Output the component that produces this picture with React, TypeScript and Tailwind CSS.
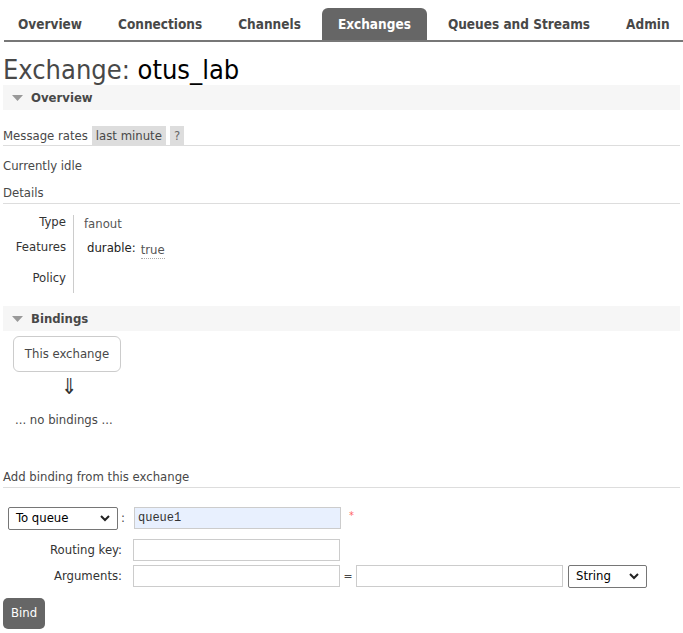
import React from 'react'

const font = { fontFamily: '"DejaVu Sans Condensed", "DejaVu Sans", Verdana, sans-serif' }

const tabs = ['Overview', 'Connections', 'Channels', 'Exchanges', 'Queues and Streams', 'Admin']

function Tri() {
    return (
        <svg width="11" height="8" viewBox="0 0 11 8" className="mr-[8px]">
            <path d="M0 1 L11 1 L5.5 7 Z" fill="#999" />
        </svg>
    )
}

function SectionHeader({ title }: { title: string }) {
    return (
        <div className="flex items-center h-[25px] bg-[#f6f6f6] pl-[9px] text-[13px] font-bold text-[#484848]">
            <Tri />
            {title}
        </div>
    )
}

function TextBox({ value, blue, w = 'w-[207px]' }: { value?: string; blue?: boolean; w?: string }) {
    return (
        <div
            className={`${w} h-[22px] border border-[#ccc] flex items-center pl-[3px] text-[12px] text-[#333] ${blue ? 'bg-[#e8f0fe]' : 'bg-white'}`}
            style={{ fontFamily: '"Liberation Mono", "Courier New", monospace' }}
        >
            {value}
        </div>
    )
}

function Select({ label, w }: { label: string; w: string }) {
    return (
        <div className={`${w} h-[23px] border border-[#767676] rounded-[2px] flex items-center justify-between px-[7px] text-[13px] text-black bg-white`}>
            <span>{label}</span>
            <svg width="10" height="7" viewBox="0 0 10 7">
                <path d="M1 1 L5 5 L9 1" fill="none" stroke="#222" strokeWidth="2" />
            </svg>
        </div>
    )
}

export default function App() {
    return (
        <div className="w-[683px] h-[633px] bg-white text-[#484848] overflow-hidden" style={font}>
            {/* tabs */}
            <div className="flex items-end h-[42px] ml-[4px] border-b-2 border-[#777] whitespace-nowrap">
                {tabs.map((t, i) => (
                    <div
                        key={t}
                        className={
                            t === 'Exchanges'
                                ? 'shrink-0 h-[32px] px-[16px] mx-[3px] flex items-center bg-[#666] text-white rounded-t-[6px] text-[13.5px] font-bold'
                                : `shrink-0 h-[32px] ${i === 0 ? 'pl-[14px] pr-[18px]' : 'px-[18px]'} flex items-center text-[#484848] text-[13.5px] font-bold`
                        }
                    >
                        {t}
                    </div>
                ))}
            </div>

            <div className="px-[3px]">
                <h1 className="text-[27px] leading-[30px] mt-[13px] text-[#484848]">
                    Exchange: <span className="text-black">otus_lab</span>
                </h1>

                <SectionHeader title="Overview" />

                <div className="mt-[16px] flex items-center h-[20px] border-b border-[#ddd] text-[13px]">
                    <span className="mr-[4px]">Message rates</span>
                    <span className="bg-[#ddd] px-[4px] h-[19px] flex items-center">last minute</span>
                    <span className="bg-[#ddd] ml-[4px] px-[4px] h-[19px] flex items-center text-[#666]">?</span>
                </div>

                <div className="mt-[10px] text-[13px] leading-[20px]">Currently idle</div>
                <div className="mt-[7px] text-[13px] leading-[20px] border-b border-[#ddd]">Details</div>

                <div className="mt-[11px] flex text-[13px] leading-[14px]">
                    <div className="w-[71px] h-[78px] flex flex-col items-end pr-[7px] border-r border-[#ccc] text-[#333]">
                        <div className="h-[25px]">Type</div>
                        <div className="h-[31px]">Features</div>
                        <div>Policy</div>
                    </div>
                    <div className="pl-[10px] pt-[2px]">
                        <div className="h-[24px] text-[#555]">fanout</div>
                        <div className="flex items-start pl-[3px] text-[#222]">
                            <span>durable:</span>
                            <span className="ml-[5px] mt-[1px] text-[#555] border-b border-dotted border-[#aaa] leading-[16px]">true</span>
                        </div>
                    </div>
                </div>

                <div className="mt-[13px]">
                    <SectionHeader title="Bindings" />
                </div>

                <div className="mt-[5px] ml-[10px] w-[108px] h-[36px] border border-[#ccc] rounded-[6px] flex items-center justify-center text-[13px] text-[#484848]">
                    This exchange
                </div>
                <div className="ml-[58px] mt-[3px] text-[22px] leading-[24px] text-[#333]">⇓</div>
                <div className="mt-[11px] ml-[12px] text-[13px]">... no bindings ...</div>

                <div className="mt-[37px] text-[13px] leading-[20px] border-b border-[#ddd]">Add binding from this exchange</div>

                <div className="mt-[19px] flex flex-col gap-[9px] text-[13px]">
                    <div className="flex items-center">
                        <div className="ml-[5px]"><Select label="To queue" w="w-[110px]" /></div>
                        <span className="ml-[3px] w-[13px]">:</span>
                        <TextBox value="queue1" blue />
                        <span className="ml-[8px] text-[#f66] text-[11px] -mt-[4px]">*</span>
                    </div>
                    <div className="flex items-center">
                        <span className="w-[120px] text-right pr-[1px] text-[#333]">Routing key:</span>
                        <span className="w-[10px]" />
                        <TextBox />
                    </div>
                    <div className="flex items-center -mt-[5px]">
                        <span className="w-[120px] text-right pr-[1px] text-[#333]">Arguments:</span>
                        <span className="w-[10px]" />
                        <TextBox />
                        <span className="w-[16px] text-center text-[12px]">=</span>
                        <TextBox />
                        <div className="ml-[5px]"><Select label="String" w="w-[79px]" /></div>
                    </div>
                </div>

                <button className="mt-[10px] h-[31px] px-[8px] bg-[#666] text-white rounded-[5px] text-[13px]">Bind</button>
            </div>
        </div>
    )
}
